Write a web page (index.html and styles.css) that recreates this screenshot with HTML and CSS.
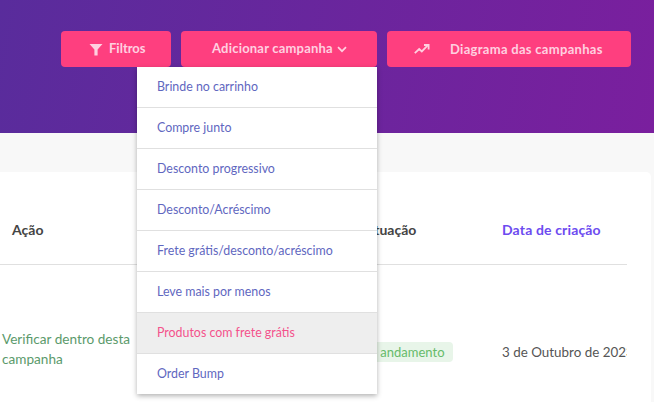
FILE: index.html
```html
<!DOCTYPE html>
<html lang="pt-BR">
<head>
<meta charset="utf-8">
<title>Campanhas</title>
<link rel="stylesheet" href="styles.css">
</head>
<body>
<header class="hero">
  <div class="actions">
    <button class="btn btn-filter">
      <svg class="ico" width="14" height="13" viewBox="0 0 14 13"><path d="M0.5 1h13L8.6 6.6V12.5H5.4V6.6z" fill="#ffd0e0"/></svg>
      <span class="btn-label-up">Filtros</span>
    </button>
    <div class="dropdown">
      <button class="btn btn-add">
        <span class="btn-label-up">Adicionar campanha</span>
        <svg width="10" height="7" viewBox="0 0 10 7"><path d="M1 1.2l4 4 4-4" fill="none" stroke="#ffd0e0" stroke-width="1.7"/></svg>
      </button>
      <ul class="menu">
        <li class="menu-item">Brinde no carrinho</li>
        <li class="menu-item">Compre junto</li>
        <li class="menu-item">Desconto progressivo</li>
        <li class="menu-item">Desconto/Acréscimo</li>
        <li class="menu-item">Frete grátis/desconto/acréscimo</li>
        <li class="menu-item">Leve mais por menos</li>
        <li class="menu-item is-active">Produtos com frete grátis</li>
        <li class="menu-item">Order Bump</li>
      </ul>
    </div>
    <button class="btn btn-chart">
      <svg class="ico" width="16" height="10" viewBox="0 0 16 10"><path d="M0.8 9.2l4.4-4.2 2.6 2.4 5.4-5.6M10 1h4.6v4.4" fill="none" stroke="#ffd0e0" stroke-width="1.8"/></svg>
      <span>Diagrama das campanhas</span>
    </button>
  </div>
</header>
<main class="content">
  <section class="card">
    <div class="table">
      <div class="row row-head">
        <div class="cell cell-action">Ação</div>
        <div class="cell cell-status">Situação</div>
        <div class="cell cell-date sorted">Data de criação</div>
      </div>
      <div class="row row-body">
        <div class="cell cell-action link">Verificar dentro desta campanha</div>
        <div class="cell cell-status"><span class="badge">Em andamento</span></div>
        <div class="cell cell-date">3 de Outubro de 2023</div>
      </div>
    </div>
  </section>
</main>
</body>
</html>
```
FILE: styles.css
```css
* { box-sizing: border-box; }
html, body { margin: 0; height: 100%; overflow: hidden; }
body {
  background: #f8f8f8;
  font-family: "Lato", "Liberation Sans", sans-serif;
  font-size: 13px;
  color: #444;
}
.hero {
  height: 133px;
  padding: 31px 23px 0 0;
  background: linear-gradient(100deg, #592c9c 0%, #7a1f9e 100%);
}
.actions { display: flex; justify-content: flex-end; gap: 10px; }
.btn {
  display: flex;
  align-items: center;
  height: 36px;
  border: 0;
  border-radius: 4px;
  background: #fe3f7f;
  color: #ffd0e0;
  font: 700 13px "Lato", "Liberation Sans", sans-serif;
  letter-spacing: 0.3px;
  padding: 0;
}
.btn-label-up { position: relative; top: -1px; }
.btn-filter { width: 110px; padding-left: 28px; gap: 6px; letter-spacing: 0; }
.btn-add { width: 196px; padding-left: 31px; gap: 4px; letter-spacing: 0.2px; }
.btn-chart { width: 244px; padding-left: 27px; gap: 20px; }
.dropdown { position: relative; }
.menu {
  position: absolute;
  z-index: 2;
  top: 36px;
  right: 0;
  width: 240px;
  margin: 0;
  padding: 0;
  list-style: none;
  background: #fff;
  box-shadow: 0 2px 5px rgba(0,0,0,.3);
}
.menu-item {
  height: 41px;
  padding: 0 20px;
  line-height: 40px;
  color: #5f67bf;
  font-size: 12.4px;
  border-bottom: 1px solid #e0e0e0;
}
.menu-item:last-child { height: 40px; border-bottom: 0; }
.is-active { background: #eeeeee; color: #f4528c; }
.content { padding: 39px 3px 0 0; }
.card { background: #fff; border-radius: 0 5px 5px 0; height: 300px; padding-right: 24px; }
.table { width: 627px; overflow: hidden; }
.row { display: flex; }
.row-head { height: 93px; align-items: center; border-bottom: 1px solid #e0e0e0; font-weight: 700; font-size: 14px; color: #444; padding-top: 22px; }
.row-head .cell-status { padding-left: 9px; }
.row-head .sorted { letter-spacing: 0.15px; }
.row-body { height: 174px; align-items: center; }
.cell { flex: none; }
.cell-action { width: 354px; padding-left: 12px; }
.row-body .cell-action { padding: 0 215px 6px 2px; line-height: 20px; font-size: 13.6px; }
.cell-status { width: 148px; }
.cell-date { width: 125px; white-space: nowrap; }
.sorted { color: #6d4bf0; }
.link { color: #5b9a6b; }
.row-body .cell-date { font-size: 13.4px; color: #555; }
.badge {
  display: inline-block;
  height: 20px;
  line-height: 20px;
  margin-left: -12px;
  padding: 0 8px 0 17px;
  border-radius: 4px;
  background: #e8f5e9;
  color: #66bb6a;
  white-space: nowrap;
}
```
